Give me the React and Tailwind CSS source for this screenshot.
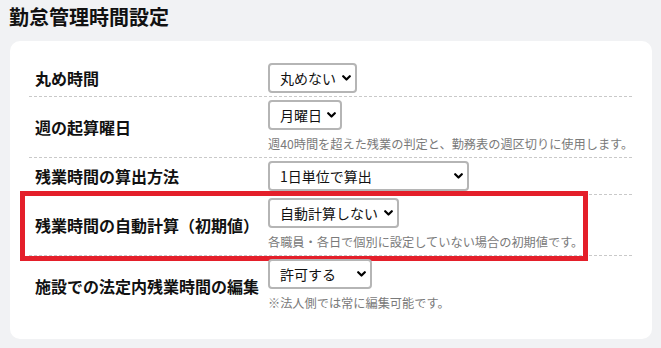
import React from 'react'

// --- Chevron del select ---
const IconChevron = () => (
  <svg className="w-[9px] h-[6px]" viewBox="0 0 9 6" fill="none" stroke="currentColor" strokeWidth={2.2} strokeLinecap="round" strokeLinejoin="round">
    <path d="M1.2 1.2L4.5 4.5L7.8 1.2" />
  </svg>
)

const Select = ({ value, options, width }) => (
  <div className="relative inline-block align-top">
    <select
      defaultValue={value}
      className={`appearance-none block h-[30px] ${width} border-2 border-[#b5b5b5] rounded-[4px] bg-white pl-[10px] pr-[12px] text-[14px] leading-[26px] text-[#111] outline-none`}
    >
      {options.map(o => (
        <option key={o} value={o}>{o}</option>
      ))}
    </select>
    <span className="pointer-events-none absolute right-[6px] top-1/2 -translate-y-1/2 text-black flex">
      <IconChevron />
    </span>
  </div>
)

const rows = [
  {
    label: '丸め時間',
    value: '丸めない',
    options: ['丸めない', '1分', '5分', '10分', '15分'],
    width: 'w-[89px]',
  },
  {
    label: '週の起算曜日',
    value: '月曜日',
    options: ['日曜日', '月曜日', '火曜日', '水曜日', '木曜日', '金曜日', '土曜日'],
    width: 'w-[74px]',
    help: '週40時間を超えた残業の判定と、勤務表の週区切りに使用します。',
  },
  {
    label: '残業時間の算出方法',
    value: '1日単位で算出',
    options: ['1日単位で算出', '1週単位で算出'],
    width: 'w-[201px]',
  },
  {
    label: '残業時間の自動計算（初期値）',
    value: '自動計算しない',
    options: ['自動計算しない', '自動計算する'],
    width: 'w-[131px]',
    help: '各職員・各日で個別に設定していない場合の初期値です。',
    highlight: true,
  },
  {
    label: '施設での法定内残業時間の編集',
    value: '許可する',
    options: ['許可する', '許可しない'],
    width: 'w-[104px]',
    help: '※法人側では常に編集可能です。',
    last: true,
  },
]

export default function App() {
  return (
    <div className="min-h-screen w-[661px] h-[348px] bg-[#f1f2f4] px-[10px] pt-[3px] font-['Noto_Sans_CJK_JP','Noto_Sans',sans-serif] text-[#111] overflow-hidden">
      {/* --- Título --- */}
      <h1 className="text-[20px] leading-[28px] font-bold text-[#111] -ml-px">勤怠管理時間設定</h1>

      {/* --- Tarjeta --- */}
      <div className="mt-[10px] w-[642px] bg-white rounded-[10px] pl-[19px] pr-[20px] pt-[19px] pb-[23px]">
        {rows.map(r => (
          <div
            key={r.label}
            className={`relative flex items-center py-[3px] ${r.last ? '' : 'border-b border-dashed border-[#c9c9c9]'}`}
          >
            <div className="w-[239px] shrink-0 pl-[6px] text-[16px] font-bold leading-[22px]">{r.label}</div>
            <div className="flex-1 min-w-0">
              <Select value={r.value} options={r.options} width={r.width} />
              {r.help && (
                <p className="mt-[4px] text-[12.2px] leading-[20px] text-[#7a7a7a] whitespace-nowrap">{r.help}</p>
              )}
            </div>

            {/* Recuadro rojo de resaltado */}
            {r.highlight && (
              <div className="pointer-events-none absolute -left-[9px] -top-[4px] w-[568px] h-[70px] border-[5px] border-[#e41f2a]" />
            )}
          </div>
        ))}
      </div>
    </div>
  )
}
